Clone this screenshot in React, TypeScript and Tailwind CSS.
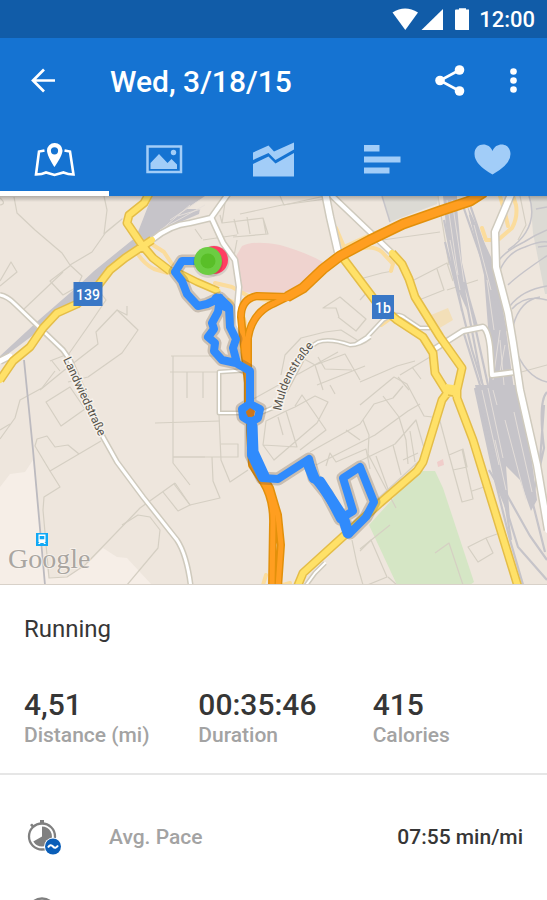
import React from "react";

type RoadProps = { d: string; w: number; fill: string; edge: string };

function Road({ d, w, fill, edge }: RoadProps) {
  return (
    <g fill="none" strokeLinejoin="round">
      <path d={d} stroke={edge} strokeWidth={w + 3} />
      <path d={d} stroke={fill} strokeWidth={w} strokeLinecap="round" />
    </g>
  );
}

const orange = { fill: "#ff9e20", edge: "#e2900b" };
const yellow = { fill: "#ffe168", edge: "#e4bd48" };
const white = { fill: "#ffffff", edge: "#cfcabd" };

const lanes = [
  "M14 197L17 213L35 230L62 253L70 265L82 276L77 287L63 295L50 281L71 265",
  "M70 265L92 252L106 232L122 219L104 234L107 210L104 196",
  "M24 309L63 272M0 281L11 262L17 272L0 286M0 198Q7 204 0 205",
  "M68 355L89 325L106 300L100 292",
  "M40 390L62 372L98 344L96 332L117 310L138 330L122 353L88 377L68 382",
  "M50 361L68 354M52 361L60 371M117 310L127 315V306",
  "M0 439L15 418L20 400L42 388L55 371",
  "M46 402L70 387L85 409L61 426ZM101 441L50 471L60 487L44 497L43 510L49 578L67 577L85 565L140 508L175 483",
  "M50 471L35 446L37 439L47 436L55 447L68 445L79 454",
  "M122 525L138 515L150 517L160 530L158 548L127 585M163 492L178 511L190 505L175 483",
  "M171 356H220M170 372H219M155 423L220 421M173 356L173 463L190 485M173 457L205 457M187 372V398M203 372V398",
  "M219 415L221 460L230 482L248 470M221 444H238V457H173M212 457L213 481L220 498L190 505L174 484",
  "M220 215L222 223L263 218L268 234L233 237M234 219L238 234M247 217L250 234M263 218L266 234M222 223L226 196M280 196L284 205L325 196",
  "M195 229L202 239M203 240L237 235M234 256L237 240M200 268L209 274",
  "M240 214L282 205L326 199M339 317L336 308L323 308L340 297L366 319L356 331L338 317M281 375L285 355L301 338L325 332L341 330L360 342",
  "M297 355L315 365L323 390M318 357L325 369L352 370M315 365L345 354L360 380M317 385L365 366M248 402L338 352",
  "M266 421L286 411L295 407L315 396L328 402L317 423L274 460L263 445ZM278 417L283 435M286 411L297 447L263 445M295 406L302 395L326 430L300 450M330 385L335 394",
  "M310 452L360 424L374 404L393 398L403 386M316 465L375 435L408 411L420 404M326 466L330 453L336 462L366 449L370 469",
  "M360 405L394 377L407 384L424 416L432 417M383 396L399 417L406 440L408 464M363 420L369 435L368 454L396 508M360 461L395 444L416 420L426 455",
  "M393 445L401 475M376 456L388 489M410 431L415 462M403 460L418 453M371 505L418 462M346 430L360 440",
  "M412 281L447 263L453 281M437 269L444 290L419 300M447 290L478 280M360 279L382 273L393 271M368 242L440 232M438 196L449 265",
  "M400 375L435 354M360 382L397 366L415 361M398 377L409 390M412 367L421 379M437 410L449 455L463 449L467 467L453 470M449 455L462 502L473 499L462 449M472 491L484 487",
  "M468 547L486 538L493 553L478 562ZM486 538L497 534M463 585L449 543L435 553M360 551L371 540L387 577L360 588M388 577L397 585",
  "M352 540L357 564L363 585M360 549L390 525M520 196L526 225L518 240M514 374L547 365M360 300L369 290M0 430L10 424",
];

const sidings = [
  "M446 196L468 310L482 383M450 196L458 260L478 330M455 196L461 263L488 385M462 203L482 260L501 328",
  "M467 196L490 263L506 331M470 215L488 280M444 220L462 311M445 242L472 350L485 392M464 334L485 401",
  "M547 392Q538 401 544 448L537 480L548 528M544 405L540 461L532 500L545 552M489 470L504 495L511 540",
  "M478 390L502 486L530 536L547 560M488 385L506 508L518 547L547 580M475 388L495 480L510 540L524 588",
];

const spurs = [
  "M499 260Q507 250 524 242Q535 235 547 230M500 270Q508 252 525 247Q540 241 547 242M508 285Q515 278 532 266T547 256M510 306Q522 290 547 286M512 309Q525 294 547 300",
  "M513 326Q520 300 540 297M514 346Q525 377 547 382M529 196Q540 228 508 250M538 247L547 246M536 209L547 207",
];

const routePath =
  "M208 261L182 261L175 272L182 281L187 294L198 306L207 304L220 298L218 312L212 323L214 329L208 337L215 343L214 351L222 360L236 363L250 371L250 404L242 409L243 417L251 422L258 418L260 409L250 404M251 422L251 455L262 478L278 479L309 459L314 478L327 494L340 519L353 511L343 478L360 467L374 502L366 517L350 533L343 518M220 298L229 307L230 327L236 339L233 348L237 363";

const routeOverlap = "M252 426L253 452L264 476M308 463L314 478M320 482L342 516M217 299L226 306M348 533L344 520";

function RouteMap() {
  return (
    <svg
      className="block aspect-[547/389] w-full shrink-0"
      viewBox="0 196 547 389"
      role="img"
      aria-label="Route map"
    >
      <rect y="196" width="547" height="389" fill="#eee6dd" />
      <path d="M0 487L10 474L25 472L33 460L43 552L49 578L67 577L88 563L103 548L117 557L127 558L152 585H0Z" fill="#f6eee7" />
      <path d="M382 196L390 222L437 204L439 196Z" fill="#dcdad4" />
      <path d="M530 196L533 233L545 294H547V196Z" fill="#dcdad4" />
      <path d="M235 258L242 246Q254 240 280 245Q305 252 323 262L300 288L283 295L243 292Z" fill="#efd3cf" />
      <path d="M369 525L418 471H435L443 488L474 582L470 585H397Z" fill="#d5e6c5" />
      <path d="M431 315L448 308L453 320L438 329Z" fill="#f3dfb8" />
      <path d="M437 462L443 459L444 465L438 467Z" fill="#f0cdca" />

      <g fill="none" stroke="#d5cfc3" strokeWidth="1.200" strokeLinejoin="round">
        {lanes.map((d) => (
          <path key={d} d={d} />
        ))}
      </g>

      <path d="M0 356L40 319L78 286L94 271L136 237L152 196H205L186 209L200 209L199 214L166 228L145 241L112 265L93 288L75 302L40 330L0 360Z" fill="#c6c4c9" />
      <path d="M24 360L33 450L45 585" fill="none" stroke="#bcbabf" strokeWidth="1.800" />
      <path d="M382 196L390 222" fill="none" stroke="#c6c4c9" strokeWidth="1.500" />
      <path d="M443 196H457L457 230L462 268L467 310L456 285L447 235ZM467 205L497 270L506 330L514 390H489L489 340L484 275Z" fill="#c6c4c9" />
      <path d="M475 385L516 385L528 431L537 500L531 511L520 480L506 466L510 520L495 483Z" fill="#c6c4c9" />
      <g fill="none" stroke="#c6c4c9" strokeWidth="2.200">
        {sidings.map((d) => (
          <path key={d} d={d} />
        ))}
      </g>
      <g fill="none" stroke="#c6c4c9" strokeWidth="1.500">
        {spurs.map((d) => (
          <path key={d} d={d} />
        ))}
      </g>
      <path
        d="M447 200L458 275M452 200L464 282M152 238L190 205M160 230L205 205M482 390L499 465M488 388L503 458M493 390L497 405M505 420L526 500M514 412L532 492M495 440L506 490M500 330L493 380M505 345L500 372M450 240L460 290M487 280L494 330M170 220L200 200M178 216L201 209M500 340L504 385M474 225L491 290"
        fill="none"
        stroke="#e6e0da"
        strokeWidth="0.900"
      />

      <g fill="none" stroke="#fbdc9c" strokeWidth="4" strokeLinejoin="round" strokeLinecap="round">
        <path d="M137 253Q145 265 154 269L168 273M150 243L164 252L172 264" />
        <path d="M215 283L232 287L250 297L272 301M228 300Q239 303 245 322L247 340M336 228L344 247L370 235L410 219" />
        <path d="M345 254Q370 242 382 252L393 264L391 271M482 228L486 240L498 240L512 228Q518 217 516 205L513 196M500 196L505 213L508 226M381 325L395 315L417 333" />
        <path d="M263 585L266 575M283 585L290 583" />
      </g>

      <Road d="M0 295Q7 296 15 304L40 328L63 350L70 360L103 437L117 462L143 497L177 540Q187 555 191 588" w={3} {...white} />
      <Road d="M0 361L10 356" w={5} {...white} />
      <Road
        d="M152 240Q170 225 190 223L211 218L228 194M326 190L370 232L392 253M433 350L463 331L483 327Q488 330 490 347L492 375L515 372M212 219L223 243L235 260L239 287L237 310L236 338"
        w={4}
        {...white}
      />
      <Road d="M325 192L330 217L338 252M512 192L495 232L496 267L508 313L513 343L520 390L537 465L548 530" w={6} {...white} />
      <Road
        d="M356 344L367 337L383 320Q397 311 405 318L420 328H430M370 337Q360 345 350 345Q330 338 318 342L310 347L302 360L285 392L277 406L258 414M250 370L219 372L219 413H242M304 588L315 573L325 563"
        w={2}
        {...white}
      />

      <Road
        d="M0 380L13 361L30 347L43 328L57 313L77 304L97 287L110 270L125 258L152 240M150 192L144 203L129 215L127 223L142 245L153 258L170 271M343 258L377 303L397 320L423 337L433 353L435 373L448 394M392 253L402 264L409 279L415 297L440 337L462 368L457 390L448 392L442 400L423 462L417 471L380 503L303 573L296 590M457 388L457 398L473 440L519 590"
        w={6}
        {...yellow}
      />
      <Road d="M177 272L197 282L218 291" w={5} {...yellow} />
      <path d="M446 384L460 386L457 397L446 396Z" fill="#ffe168" />
      <path d="M448 395L453 396" stroke="#e4bd48" strokeWidth="1.500" />

      <Road
        d="M290 297L257 296Q241 299 241 317L245 357L250 400V430L252 465L263 482Q274 500 273 525L272 588M295 293L275 303Q252 312 248 338V410L256 465L270 488L278 515L281 545L278 588"
        w={5}
        {...orange}
      />
      <Road d="M484 192L470 201L440 211L403 224L370 240L340 256L323 269L303 288L287 297" w={8} {...orange} />
      <path d="M290 297L257 296Q241 299 241 317M275 303Q252 312 248 338" fill="none" stroke="#ff9e20" strokeWidth="5" />

      <g fill="none" strokeLinejoin="round" strokeLinecap="round">
        <path d={routePath} stroke="#5a4630" strokeOpacity="0.250" strokeWidth="13" />
        <path d={routePath} stroke="#308bfc" strokeWidth="8" />
        <path d={routeOverlap} stroke="#308bfc" strokeWidth="11" />
      </g>
      <path d="M246 412L250 408L255 411L254 416L248 417Z" fill="#cc761c" />

      <circle cx="214" cy="261" r="15.500" fill="#000000" fillOpacity="0.100" />
      <circle cx="214" cy="260" r="14" fill="#ff3d62" />
      <circle cx="208" cy="263" r="15" fill="#000000" fillOpacity="0.100" />
      <circle cx="208" cy="261" r="14" fill="#6ccd42" />
      <circle cx="208" cy="261" r="7.500" fill="#59bf28" />

      <g className="font-[Roboto,sans-serif]" textAnchor="middle">
        <g fill="#ffffff" fontSize="14" fontWeight="500">
          <rect x="73.500" y="282" width="29" height="24" fill="#3977c6" />
          <text x="88" y="300">139</text>
          <rect x="372" y="295" width="22" height="24" fill="#3977c6" />
          <text x="383" y="313">1b</text>
        </g>
        <g fill="#555249" fontSize="12" stroke="#f6f1eb" strokeWidth="3" paintOrder="stroke">
          <text transform="translate(81 398) rotate(65)">Landwiedstraße</text>
          <path id="mulden" d="M281 411Q288 373 316 344" fill="none" stroke="none" />
          <text textAnchor="start">
            <textPath href="#mulden">Muldenstraße</textPath>
          </text>
        </g>
      </g>

      <rect x="36" y="533" width="12" height="13" fill="#12a9f5" />
      <path fillRule="evenodd" d="M38.500 534.500H45.500V542H44.500L46 544H44L43.500 543H40.500L40 544H38L39.500 542H38.500ZM39.700 536V539.200H44.300V536Z" fill="#ffffff" />
      <text
        x="8"
        y="568"
        className="font-['Liberation_Serif',serif]"
        fontSize="28"
        fill="#aaa6a1"
        stroke="#f8f3ee"
        strokeWidth="1.500"
        paintOrder="stroke"
      >
        Google
      </text>
      <defs>
        <linearGradient id="shade" x1="0" y1="0" x2="0" y2="1">
          <stop offset="0" stopColor="#000000" stopOpacity="0.250" />
          <stop offset="1" stopColor="#000000" stopOpacity="0" />
        </linearGradient>
      </defs>
      <rect y="196" width="547" height="6" fill="url(#shade)" />
      <rect y="584" width="547" height="1" fill="#d8d1c9" />
    </svg>
  );
}

function StatusBar() {
  return (
    <div className="flex h-[38px] items-center justify-end bg-[#115ca8] pr-3 text-white">
      <svg className="h-6 w-[78px]" viewBox="392 7 78 24" fill="currentColor" aria-hidden="true">
        <path d="M393.500 12.500Q406 4.500 419 12.500L406.300 30Z" />
        <path d="M444 9V30H422.500Z" />
        <path d="M460 8.300H467V9.500H470Q471 9.500 471 10.500V29Q471 30 470 30H457Q456 30 456 29V10.500Q456 9.500 457 9.500H460Z" />
      </svg>
      <span className="ml-[10px] pt-0.5 text-[22px] leading-6 font-medium">12:00</span>
    </div>
  );
}

const tabs = [
  {
    name: "Map",
    icon: (
      <>
        <path d="M11.500 11.400L6 12.500L3 35.500Q9 35.500 13 33.500L21.500 36L30.500 33.500Q35 35.500 40.500 35.500L37 12.500L31.500 11.400" fill="none" stroke="currentColor" strokeWidth="2.600" />
        <path fillRule="evenodd" d="M21.500 4A7.500 7.500 0 0 0 14 11.500C14 17 21.500 28 21.500 28S29.500 17 29.500 11.500A7.700 7.700 0 0 0 21.500 4ZM21.500 8.200A3.600 3.600 0 1 1 21.500 15.400A3.600 3.600 0 1 1 21.500 8.200Z" />
      </>
    ),
  },
  {
    name: "Photos",
    icon: (
      <>
        <path d="M4.500 7.500H38V33H4.500Z" fill="none" stroke="currentColor" strokeWidth="2.500" />
        <path d="M7.500 30V24L16 15L24.500 24L28.500 20L34 25.500V30Z" />
        <circle cx="30.500" cy="13.500" r="2.700" />
      </>
    ),
  },
  {
    name: "Charts",
    icon: (
      <>
        <path d="M1 13.500L16.500 6.500L22 12.500L42 3.500V10.500L23.500 21L16.500 14L1 21Z" />
        <path d="M1 25L16.500 17.500L23.500 24.500L42 14V37.500H1Z" />
      </>
    ),
  },
  { name: "Splits", icon: <path d="M3 6H18.500V12.500H3ZM3 17.500H39.500V23.500H3ZM3 28.500H28.500V34.500H3Z" /> },
  {
    name: "Heart rate",
    icon: <path d="M21.500 35.500Q3.500 25.500 3.500 15C3.500 3.500 18 2.500 21.500 12C25 2.500 39.500 3.500 39.500 15Q39.500 25.500 21.500 35.500Z" />,
  },
];

function Header() {
  return (
    <header className="shrink-0 bg-[#1573d2] text-white">
      <StatusBar />
      <div className="flex h-[84px] items-center pr-5 pl-[29px]">
        <button type="button" aria-label="Back">
          <svg className="size-7" viewBox="0 0 28 28" fill="none" stroke="currentColor" strokeWidth="2.700">
            <path d="M26 14.500H4M15 3.500L4 14.500L15 25.500" />
          </svg>
        </button>
        <h1 className="ml-[53px] flex-1 pt-1 text-[30px] leading-9 font-medium">Wed, 3/18/15</h1>
        <button type="button" aria-label="Share">
          <svg className="size-8" viewBox="0 0 32 32" fill="currentColor">
            <path d="M24.500 6L5 16.500L24.500 27" fill="none" stroke="currentColor" strokeWidth="2.600" />
            <circle cx="24.500" cy="6" r="4.800" />
            <circle cx="5" cy="16.500" r="4.800" />
            <circle cx="24.500" cy="27" r="4.800" />
          </svg>
        </button>
        <button type="button" aria-label="More options" className="ml-10">
          <svg className="h-8 w-5" viewBox="0 0 20 32" fill="currentColor">
            <circle cx="6.500" cy="7.500" r="3.300" />
            <circle cx="6.500" cy="16.500" r="3.300" />
            <circle cx="6.500" cy="25.500" r="3.300" />
          </svg>
        </button>
      </div>
      <div role="tablist" className="grid h-[74px] grid-cols-5">
        {tabs.map((tab, i) => (
          <button
            key={tab.name}
            type="button"
            role="tab"
            aria-label={tab.name}
            aria-selected={i === 0}
            className="flex items-center justify-center border-b-[5px] border-transparent pt-1 text-[#a2cdf8] aria-selected:border-white aria-selected:text-white"
          >
            <svg className="h-10 w-[43px]" viewBox="0 0 43 40" fill="currentColor">
              {tab.icon}
            </svg>
          </button>
        ))}
      </div>
    </header>
  );
}

const stats = [
  { value: "4,51", label: "Distance (mi)" },
  { value: "00:35:46", label: "Duration" },
  { value: "415", label: "Calories" },
];

function PaceIcon() {
  return (
    <svg className="size-9" viewBox="0 0 36 36" aria-hidden="true">
      <path d="M13 1H17V4H13ZM3 6L5 4.500L7.500 7L5.500 9Z" fill="#808080" />
      <circle cx="15" cy="17.500" r="13" fill="none" stroke="#808080" strokeWidth="2.300" />
      <path d="M15 17.500V7.500A10 10 0 1 1 6.300 22.500Z" fill="#808080" />
      <circle cx="26" cy="27.500" r="9" fill="#ffffff" />
      <circle cx="26" cy="27.500" r="8" fill="#0a5eb8" />
      <path d="M21 28.500Q23.500 24.500 26 27.500T31 26.500" fill="none" stroke="#ffffff" strokeWidth="2" />
    </svg>
  );
}

function Summary() {
  return (
    <section className="border-b-2 border-[#e6e6e6] pt-7 pb-6 pl-6">
      <h2 className="text-2xl leading-8">Running</h2>
      <dl className="mt-11 grid grid-cols-3">
        {stats.map((stat) => (
          <div key={stat.label} className="flex flex-col-reverse">
            <dt className="text-[21px] leading-7 font-medium text-[#a3a3a3]">{stat.label}</dt>
            <dd className="text-[30px] leading-8 font-medium">{stat.value}</dd>
          </div>
        ))}
      </dl>
    </section>
  );
}

export default function App() {
  return (
    <div className="flex h-screen flex-col bg-white font-[Roboto,sans-serif] text-[#363636]">
      <Header />
      <main className="min-h-0 flex-1 overflow-y-auto [scrollbar-width:none]">
        <RouteMap />
        <Summary />
        <ul className="pt-6">
          <li className="flex h-[75px] items-center px-6 text-[21px] leading-7 font-medium">
            <span className="w-[82px] pl-[3px]">
              <PaceIcon />
            </span>
            <span className="ml-[3px] flex-1 text-[#a3a3a3]">Avg. Pace</span>
            <span>07:55 min/mi</span>
          </li>
          <li className="flex h-[75px] items-center px-6">
            <svg className="ml-[3px] size-[30px]" viewBox="0 0 30 30" aria-hidden="true">
              <circle cx="15" cy="15" r="13.500" fill="none" stroke="#808080" strokeWidth="2.500" />
            </svg>
          </li>
        </ul>
      </main>
    </div>
  );
}
